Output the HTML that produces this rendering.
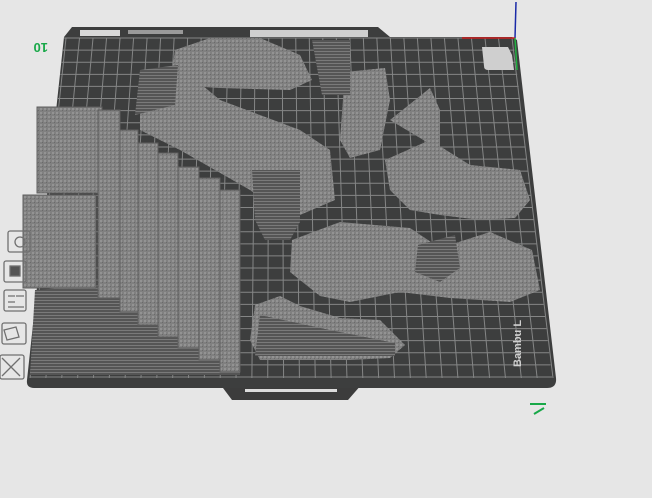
<!DOCTYPE html>
<html><head><style>
html,body{margin:0;padding:0;background:#e6e6e6;width:652px;height:498px;overflow:hidden}
svg{display:block}
</style></head><body>
<svg width="652" height="498" viewBox="0 0 652 498" xmlns="http://www.w3.org/2000/svg">
<defs>
<pattern id="tex" width="4" height="4" patternUnits="userSpaceOnUse">
<rect width="4" height="4" fill="#808080"/><rect x="0" y="0" width="2" height="2" fill="#939393"/><rect x="2" y="2" width="1" height="1" fill="#6a6a6a"/>
</pattern>
<pattern id="dtex" width="4" height="3" patternUnits="userSpaceOnUse">
<rect width="4" height="3" fill="#555"/><rect x="0" y="0" width="4" height="1" fill="#7a7a7a"/>
</pattern>
</defs>
<path d="M220 384 L232 400 L348 400 L362 384 Z" fill="#3c3c3c"/>
<rect x="245" y="389" width="92" height="3" fill="#dcdcdc"/>
<path d="M72 27 L378 27 L390 37 L512 37 L517 40 L556 378 Q557 388 547 388 L34 388 Q26 388 27 380 L64 37 Z" fill="#3d3e3e"/>
<rect x="80" y="30" width="40" height="6" fill="#d8d8d8"/>
<rect x="128" y="30" width="55" height="4" fill="#9a9a9a"/>
<rect x="250" y="30" width="118" height="7" fill="#cfcfcf"/>
<g id="grid" stroke="#858686" stroke-width="1"></g>
<path d="M482 47 L508 47 L512 55 L514 70 L488 70 Q484 70 484 66 Z" fill="#cfcfcf"/>
<g fill="url(#tex)">
<path d="M175 50 L210 38 L260 38 L300 55 L312 80 L290 90 L220 88 L170 85 Z"/>
<path d="M140 90 L190 75 L220 100 L260 115 L300 130 L330 150 L335 200 L300 215 L270 205 L250 190 L215 170 L180 150 L140 130 Z"/>
<path d="M345 72 L385 68 L390 100 L380 150 L350 158 L340 140 Z"/>
<path d="M312 40 L350 40 L350 95 L322 95 Z" fill="url(#dtex)"/>
<path d="M390 120 L430 88 L440 110 L440 150 Z"/>
<path d="M385 160 L430 140 L470 165 L520 170 L530 200 L515 218 L480 220 L440 215 L410 210 L390 190 Z"/>
<path d="M292 240 L340 222 L410 228 L440 248 L490 232 L532 250 L540 290 L510 302 L450 298 L400 292 L350 302 L320 296 L290 272 Z"/>
<path d="M252 170 L300 170 L300 222 L290 240 L265 240 L255 220 Z" fill="url(#dtex)"/>
<path d="M255 305 L280 296 L300 306 L340 318 L380 320 L405 345 L390 358 L350 360 L300 360 L260 360 L250 340 Z"/>
<path d="M260 315 L330 330 L395 343 L395 356 L255 356 Z" fill="url(#dtex)"/>
<path d="M418 245 L455 235 L460 268 L440 282 L415 272 Z" fill="url(#dtex)"/>
<path d="M140 70 L178 65 L175 105 L135 115 Z" fill="url(#dtex)"/>
<path d="M30 375 L35 290 L100 285 L240 300 L240 375 Z" fill="url(#dtex)"/>
<rect x="37" y="107" width="65" height="86" fill="url(#tex)" stroke="#5e5e5e"/>
<rect x="23" y="195" width="73" height="93" fill="url(#tex)" stroke="#5e5e5e"/>
<rect x="98" y="110" width="22" height="188" stroke="#5e5e5e"/>
<rect x="120" y="130" width="18" height="182" stroke="#5e5e5e"/>
<rect x="138" y="143" width="20" height="182" stroke="#5e5e5e"/>
<rect x="158" y="153" width="20" height="184" stroke="#5e5e5e"/>
<rect x="178" y="167" width="21" height="181" stroke="#5e5e5e"/>
<rect x="199" y="178" width="21" height="182" stroke="#5e5e5e"/>
<rect x="220" y="190" width="20" height="182" stroke="#5e5e5e"/>
</g>
<text x="521" y="367" transform="rotate(-90 521 367)" font-family="Liberation Sans,sans-serif" font-size="11" font-weight="bold" fill="#cfcfcf">Bambu L</text>
<line x1="515" y1="38" x2="516" y2="2" stroke="#1a2aa8" stroke-width="1.5"/>
<line x1="462" y1="38" x2="515" y2="38" stroke="#cc2020" stroke-width="1.5"/>
<line x1="515" y1="38" x2="517" y2="70" stroke="#20b040" stroke-width="1.5"/>
<text x="48" y="51" transform="rotate(180 48 47)" font-family="Liberation Sans,sans-serif" font-size="13" font-weight="bold" fill="#18a848">10</text>
<path d="M530 404 L546 404 M534 414 L544 408" stroke="#18a848" stroke-width="2" fill="none"/>
<g fill="none" stroke="#707070" stroke-width="1.3">
<rect x="8" y="231" width="22" height="21" rx="2"/><circle cx="20" cy="242" r="5"/>
<rect x="4" y="261" width="22" height="21" rx="2"/><rect x="10" y="266" width="10" height="10" fill="#555"/>
<rect x="4" y="290" width="22" height="21" rx="2"/><path d="M8 296h7M8 302h7M16 296h8M8 307h16"/>
<rect x="2" y="323" width="24" height="21" rx="2"/><path d="M4 330l12 -3 l3 10 l-12 3z"/>
<rect x="0" y="355" width="24" height="24" rx="2"/><path d="M2 358l18 18M20 358l-18 18"/>
</g>
</svg>
<script>
(function(){var g=document.getElementById('grid');var ns='http://www.w3.org/2000/svg';
var n=33;for(var i=0;i<=n;i++){var xt=66+i*(512-66)/n,xb=30+i*(553-30)/n;var l=document.createElementNS(ns,'line');
l.setAttribute('x1',xt);l.setAttribute('y1',38);l.setAttribute('x2',xb);l.setAttribute('y2',378);g.appendChild(l);}
var m=28;for(var j=0;j<=m;j++){var t=j/m;var y=38+t*(377-38);var xl=64-t*(64-30),xr=513+t*(552-513);
var h=document.createElementNS(ns,'line');h.setAttribute('x1',xl);h.setAttribute('y1',y);h.setAttribute('x2',xr);h.setAttribute('y2',y);g.appendChild(h);}})();
</script>
</body></html>
